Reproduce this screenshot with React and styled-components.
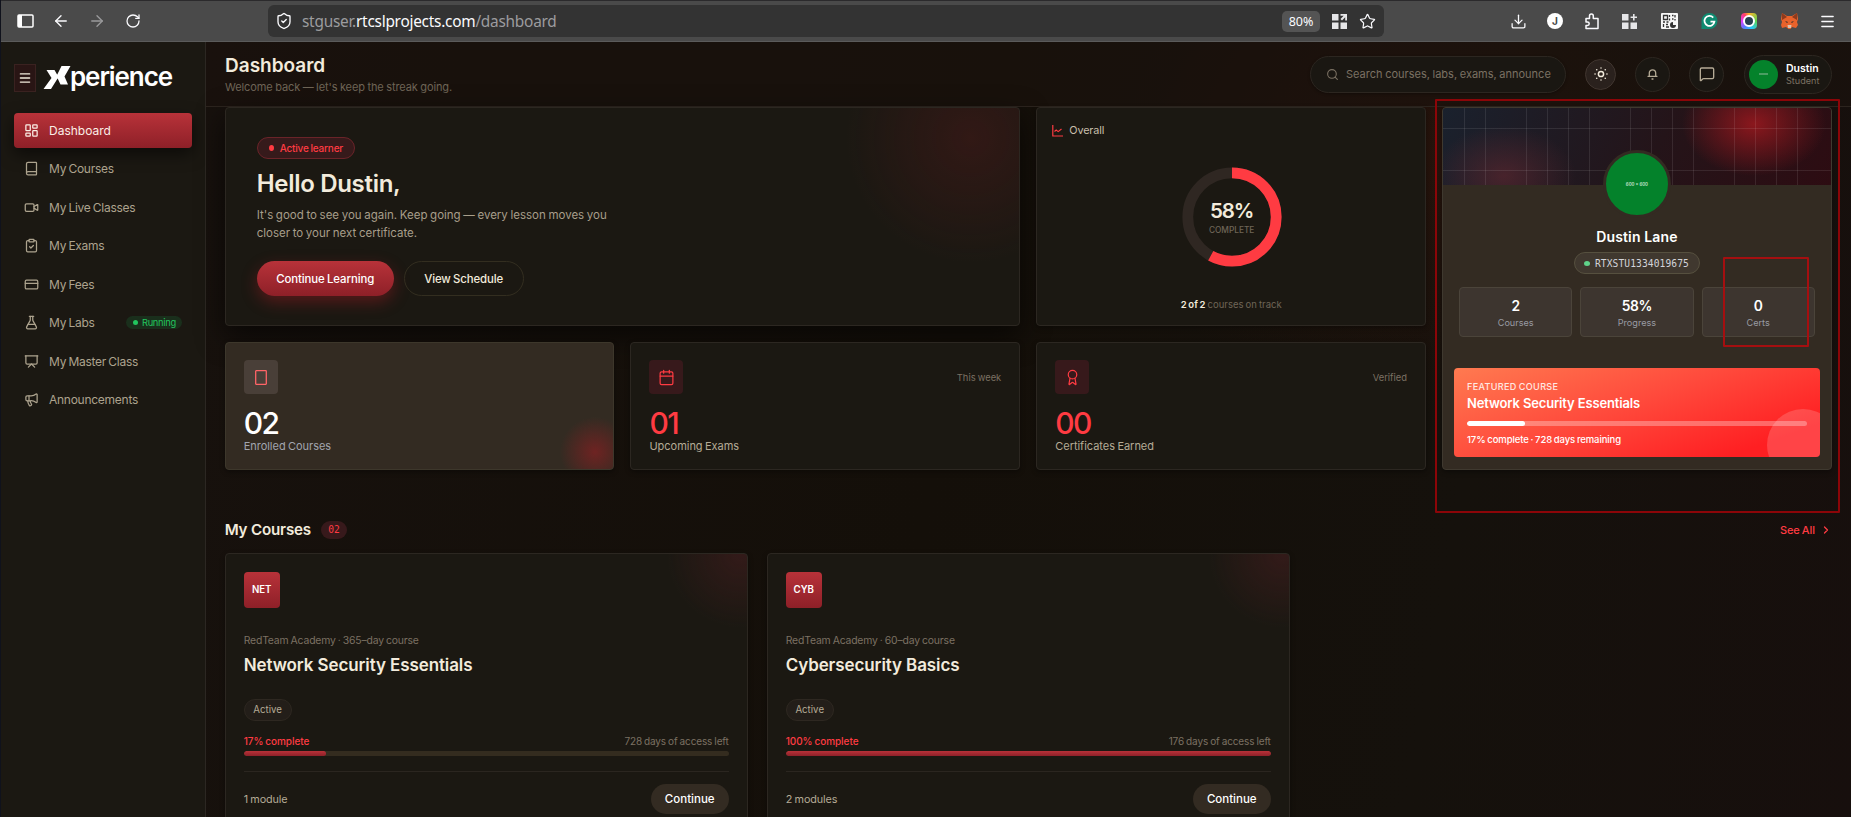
import React from "react";
import styled, { createGlobalStyle, css } from "styled-components";
import {
  ArrowLeft, ArrowRight, RotateCw, ShieldCheck, Star, Download, Menu, Search,
  MessageSquare, LayoutDashboard, Book, Video, ClipboardCheck, CreditCard, FlaskConical,
  Presentation, Megaphone, Calendar, Award, ChevronRight,
} from "lucide-react";

const Global = createGlobalStyle`
  * { box-sizing: border-box; }
  body { margin: 0; background: #140f0a; overflow: hidden; font-family: Inter, "Liberation Sans", sans-serif; }
  button { font: inherit; cursor: pointer; word-spacing: inherit; letter-spacing: inherit; }
`;

const Window = styled.div`
  display: flex; flex-direction: column; position: relative;
  width: 1851px; height: 817px; overflow: hidden;
  border-left: 1px solid #10121c; color: #f2ebdc;
`;

/* Browser bar */
const Chrome = styled.div`
  flex: none; height: 42px; display: flex; align-items: center;
  background: #4a4a4a; border-top: 1px solid #2b2a2c; border-bottom: 1px solid #5b5b5b;
  color: #fbfbfe; padding: 0 6px;
`;
const ChromeNav = styled.div`display: flex; width: 261px;`;
const ChromeButton = styled.span`
  width: ${p => p.$w || 36}px; display: flex; justify-content: center; align-items: center;
  opacity: ${p => (p.$dim ? 0.45 : 1)};
`;
const UrlBar = styled.div`
  width: 1116px; height: 32px; border-radius: 6px; background: #333; display: flex; align-items: center; padding: 0 2px 0 7px;
`;
const Url = styled.span`
  flex: 1; margin: 1px 0 0 9px; font: 15.4px/20px "Noto Sans", "Open Sans", sans-serif; color: #9c9c9f; letter-spacing: -0.25px;
  b { font-weight: 400; color: #fbfbfe; }
`;
const Zoom = styled.span`
  width: 38px; height: 21px; border-radius: 5px; background: #545454; text-align: center;
  font: 12.5px/21px "Noto Sans", sans-serif; margin-right: 6px;
`;
const Extensions = styled.div`display: flex; margin-left: auto;`;

/* Sidebar */
const Body = styled.div`flex: 1; display: flex; min-height: 0;`;
const Sidebar = styled.aside`
  flex: none; width: 205px; background: #1b1812; border-right: 1px solid #2c2722; padding: 22px 13px 0;
`;
const Brand = styled.div`display: flex; align-items: center; height: 28px; margin-bottom: 21px;`;
const Burger = styled.span`
  width: 22px; height: 28px; background: #291514; border: 1px solid #3a2220; display: grid; place-items: center; margin-right: 7px;
`;
const BrandName = styled.span`font: 600 26px/28px Inter, sans-serif; letter-spacing: -1.1px; color: #fff; margin: -2px 0 0 -1px;`;
const NavItem = styled.div`
  display: flex; align-items: center; height: 35px; margin-bottom: 3.45px; padding: 0 10px; border-radius: 4px;
  font-size: 12px; letter-spacing: -0.022em; word-spacing: -0.07em; color: #ada38e;
  ${p => p.$active && css`
    color: #fbeee6; background: linear-gradient(#b83239, #8e2028); box-shadow: 0 6px 16px rgba(0,0,0,.55);
    letter-spacing: 0;
  `}
  svg { margin-right: 10px; flex: none; }
`;
const Running = styled.span`
  margin-left: auto; display: flex; align-items: center; gap: 4px; height: 13px; padding: 0 6px 0 7px; border-radius: 7px;
  background: #1a2f1c; color: #22c55e; font-size: 9.3px;
  &::before { content: ""; width: 5px; height: 5px; border-radius: 50%; background: #22c55e; }
`;

/* Header */
const Main = styled.main`
  flex: 1; display: flex; flex-direction: column; min-width: 0;
  background: radial-gradient(330px 260px at 1229px 110px, rgba(90,25,10,.24), transparent),
    linear-gradient(100deg, #17110d, #140f09 45%, #15110c 75%, #170f0d);
`;
const Header = styled.header`
  flex: none; height: 65px; border-bottom: 1px solid #2c241e; display: flex; align-items: center; padding: 0 19px; background: rgba(27,18,14,.6);
`;
const Headings = styled.div`margin-right: auto;`;
const PageTitle = styled.h1`margin: 1px 0 0; font-size: 19px; line-height: 24px; font-weight: 600;`;
const PageSub = styled.p`margin: 2px 0 0; font-size: 11px; line-height: 15px; letter-spacing: -0.1px; word-spacing: -0.04em; color: #6f6557;`;
const SearchBox = styled.div`
  width: 256px; height: 37px; border-radius: 19px; border: 1px solid #2c2620; background: #1a1712;
  display: flex; align-items: center; padding: 0 13px 0 15px; color: #7b7163; margin-right: 19px; box-shadow: 0 1px 3px #0005;
  span { margin-left: 7px; font-size: 11px; white-space: nowrap; word-spacing: -0.04em; }
  svg { flex: none; }
`;
const RoundButton = styled.span`
  width: ${p => p.$size}px; height: ${p => p.$size}px; border-radius: 50%; display: grid; place-items: center;
  border: 1px solid ${p => (p.$lit ? "#40352f" : "#2c2620")}; background: ${p => (p.$lit ? "#2a211d" : "#1a1712")};
  color: ${p => (p.$lit ? "#f2ebdc" : "#b5ab96")}; margin-right: ${p => p.$gap || 19}px;
`;
const UserPill = styled.div`
  width: 88px; height: 39px; border-radius: 20px; border: 1px solid #2c2620; background: #1a1712;
  display: flex; align-items: center; padding-left: 4px;
`;
const SmallAvatar = styled.span`
  width: 29px; height: 29px; border-radius: 50%; background: #04822b; display: grid; place-items: center; margin-right: 8px;
  &::before { content: ""; width: 9px; height: 1.5px; background: #4a9e63; }
`;
const UserName = styled.div`font-size: 10.5px; line-height: 12px; font-weight: 600; color: #fff;`;
const UserRole = styled.div`font-size: 9.1px; line-height: 11px; color: #7b7163;`;

/* Cards */
const Content = styled.div`padding: 0 19.2px 0 18.7px; word-spacing: -0.6px;`;
const Overview = styled.div`display: grid; grid-template-columns: repeat(4, 1fr); grid-template-rows: 219px 128px; gap: 16px;`;
const Card = styled.section`
  position: relative; overflow: hidden; border: 1px solid #2c2721; border-radius: 4px; background: #1b1812; box-shadow: 0 2px 5px rgba(0,0,0,.35);
`;
const Hero = styled(Card)`
  grid-column: span 2; padding: 29px 31px;
  background: radial-gradient(circle 125px at 745px 30px, rgba(110,25,30,.27), transparent), #1b1812;
  box-shadow: 0 10px 28px rgba(0,0,0,.6);
`;
const LearnerTag = styled.div`
  width: 98px; height: 22px; border-radius: 11px; border: 1px solid #6b2429; background: #361a1b; color: #ff3b42;
  display: flex; align-items: center; padding-left: 11px; font-size: 10px; font-weight: 500; letter-spacing: -0.2px;
  &::before { content: ""; width: 5px; height: 6px; border-radius: 50%; background: #ff3b42; margin-right: 6px; }
`;
const Hello = styled.h2`margin: 9px 0 0; font-size: 24px; line-height: 32px; font-weight: 600; letter-spacing: -0.3px; word-spacing: 0;`;
const HeroText = styled.p`margin: 6px 0 0; font-size: 11.5px; line-height: 18px; color: #a89e8a;`;
const Actions = styled.div`display: flex; gap: 10px; margin-top: 19px;`;
const Action = styled.button`
  height: 35px; width: ${p => (p.$primary ? 137 : 120)}px; border-radius: 18px; padding: 0; font-size: 11.4px; font-weight: 500; letter-spacing: -0.1px;
  color: ${p => (p.$primary ? "#fff" : "#f2ebdc")};
  border: ${p => (p.$primary ? "0" : "1px solid #332e20")};
  background: ${p => (p.$primary ? "linear-gradient(#b83239, #8e2028)" : "transparent")};
  box-shadow: ${p => (p.$primary ? "0 6px 16px rgba(160,28,36,.45)" : "none")};
`;
const Overall = styled(Card)`display: flex; flex-direction: column; align-items: center;`;
const OverallTitle = styled.div`
  align-self: stretch; display: flex; align-items: center; gap: 6px; padding: 14px 0 0 15px; height: 31px; font-size: 10.8px; letter-spacing: -0.01em; color: #c9bfab;
`;
const Ring = styled.div`position: relative; margin: 28px 0 0 1px; width: 100px; height: 100px; svg { display: block; }`;
const RingLabel = styled.div`
  position: absolute; inset: 0; display: flex; flex-direction: column; align-items: center; justify-content: center; padding-top: 1px;
  b { font-size: 20.5px; line-height: 24px; font-weight: 600; letter-spacing: -0.05em; }
  span { font-size: 8.3px; line-height: 14px; font-weight: 500; color: #6f6557; }
`;
const Track = styled.p`margin: 31px 0 0; font-size: 9.5px; line-height: 14px; color: #6f6557; b { color: #f2ebdc; font-weight: 600; }`;

const Stat = styled(Card)`
  padding: 17px 18px;
  ${p => p.$warm && css`
    border-color: #3d372b;
    background: radial-gradient(circle 35px at 369px 109px, rgba(150,30,34,.6), rgba(150,30,34,0)), #332b22;
  `}
`;
const StatTop = styled.div`display: flex; justify-content: space-between; align-items: center; font-size: 9.4px; color: #7b7163;`;
const StatIcon = styled.span`
  width: 34px; height: 34px; border-radius: 4px; display: grid; place-items: center;
  background: ${p => (p.$warm ? "#493f38" : "#37191b")}; color: ${p => (p.$warm ? "#ff6467" : "#ff3b42")};
`;
const StatValue = styled.div`
  margin-top: 12px; font-size: 30px; line-height: 34px; font-weight: 500; letter-spacing: -0.05em; color: ${p => (p.$warm ? "#fff" : "#ff3b42")};
`;
const StatLabel = styled.div`font-size: 11px; line-height: 14px; margin-top: -1px; letter-spacing: -0.03px; color: ${p => (p.$warm ? "#a2a5ae" : "#b5ab96")};`;

/* Profile */
const Profile = styled(Card)`
  grid-column: 4; grid-row: 1 / span 2; background: #332b22; border-color: #3f392f; display: flex; flex-direction: column; align-items: center;
`;
const Banner = styled.div`
  flex: none; align-self: stretch; height: 77px;
  background:
    repeating-linear-gradient(90deg, transparent 0 20px, rgba(255,255,255,.09) 20px 20.8px) 1px 0,
    linear-gradient(transparent 20px, rgba(255,255,255,.09) 20px 21px, transparent 21px 62px, rgba(255,255,255,.09) 62px 63px, transparent 63px),
    radial-gradient(72px 52px at 311px 16px, rgba(150,24,30,.9), transparent),
    radial-gradient(72px 50px at 61px 68px, rgba(100,40,48,.6), transparent),
    linear-gradient(115deg, #1a212d, #241419 55%, #2d0c12);
`;
const Avatar = styled.div`
  position: relative; flex: none; width: 68px; height: 68px; margin-top: -35px; border-radius: 50%; border: 3px solid #332b22; background: #04822b;
  color: #b5dcbf; font-size: 4.3px; font-weight: 700; word-spacing: 0; display: grid; place-items: center;
`;
const ProfileName = styled.h3`margin: 9px 0 0; font-size: 14px; line-height: 20px; font-weight: 600; color: #fff; letter-spacing: .01em; word-spacing: 0;`;
const StudentId = styled.div`
  flex: none; margin-top: 5px; height: 22px; width: 126px; border-radius: 11px; border: 1px solid #56503f; background: #40382f; color: #d3d4da;
  display: flex; align-items: center; padding-left: 9px; font: 9.6px "DejaVu Sans Mono", monospace; letter-spacing: .1px;
  &::before { content: ""; width: 6px; height: 5px; border-radius: 50%; background: #5fd38a; margin-right: 5px; }
`;
const ProfileStats = styled.div`align-self: stretch; display: grid; grid-template-columns: repeat(3, 1fr); gap: 8px; padding: 0 16px; margin-top: 13px;`;
const ProfileStat = styled.div`
  height: 50px; border: 1px solid #4b443a; border-radius: 4px; background: #3d352f; text-align: center; padding-top: 9px;
  b { display: block; font-size: 13.8px; line-height: 18px; font-weight: 600; color: #fff; letter-spacing: -0.03em; }
  span { display: block; font-size: 9.1px; line-height: 15px; color: #999ba3; }
`;
const Featured = styled.div`
  position: relative; overflow: hidden; align-self: stretch; margin: 31px 11px 0; height: 89px; padding: 12px 13px; border-radius: 4px; color: #fff;
  background: linear-gradient(160deg, #ff7a50, #ff4a3c 45%, #ff1f22 85%);
  &::after { content: ""; position: absolute; right: -19px; top: 41px; width: 72px; height: 72px; border-radius: 50%; background: rgba(255,255,255,.17); }
`;
const FeaturedTag = styled.div`font-size: 9.1px; line-height: 14px; letter-spacing: .035em; font-weight: 500; opacity: .85;`;
const FeaturedTitle = styled.div`font-size: 13px; line-height: 18px; font-weight: 600; margin-top: 0; letter-spacing: -0.15px; word-spacing: 0;`;
const Meter = styled.div`
  height: 5px; border-radius: 3px; background: ${p => p.$bg}; margin-top: ${p => p.$top}px; overflow: hidden;
`;
const MeterFill = styled.div`height: 5px; border-radius: 3px; background: ${p => p.$fill};`;
const FeaturedNote = styled.div`font-size: 9.5px; line-height: 14px; margin-top: 7px; font-weight: 500; letter-spacing: -0.11px;`;

/* Courses */
const SectionHead = styled.div`display: flex; align-items: center; margin: 49px 0 12px; height: 22px;`;
const SectionTitle = styled.h2`margin: 0; font-size: 15.2px; line-height: 22px; font-weight: 600; letter-spacing: -0.2px; word-spacing: 0;`;
const Count = styled.span`
  margin-left: 10px; width: 26px; height: 18px; border-radius: 9px; background: #37191b; color: #ff3b42; text-align: center; font: 500 9.6px/17px "DejaVu Sans Mono", monospace;
`;
const SeeAll = styled.span`margin-left: auto; display: flex; align-items: center; gap: 5px; color: #ff3b42; font-size: 11px; font-weight: 500; letter-spacing: -0.12px;`;
const Courses = styled.div`display: grid; grid-template-columns: repeat(3, 1fr); gap: 19px;`;
const Course = styled(Card)`
  height: 290px; padding: 18px; background: radial-gradient(circle 74px at 515px 0, rgba(90,30,36,.38), transparent), #1b1812;
`;
const CourseBadge = styled.div`
  width: 36px; height: 36px; border-radius: 4px; background: linear-gradient(#b83239, #8e2028); color: #fff; text-align: center;
  font-size: 9.7px; line-height: 36px; font-weight: 600;
`;
const CourseMeta = styled.div`margin-top: 26px; font-size: 10.4px; line-height: 14px; letter-spacing: -0.17px; color: #7b7163;`;
const CourseTitle = styled.h3`margin: 6px 0 0; font-size: 17px; line-height: 22px; font-weight: 600; letter-spacing: -0.1px; word-spacing: 0;`;
const Status = styled.span`
  display: block; width: 48px; height: 22px; margin-top: 23px; border-radius: 11px; border: 1px solid #2e2821; background: #231e19; color: #b5ab96;
  text-align: center; font-size: 9.7px; line-height: 20px;
`;
const Progress = styled.div`
  display: flex; justify-content: space-between; margin-top: 13px; font-size: 10px; line-height: 14px; letter-spacing: -0.13px; color: #7b7163;
  b { color: #ff3b42; font-weight: 500; letter-spacing: -0.06px; }
`;
const CourseFoot = styled.div`
  display: flex; justify-content: space-between; align-items: center; margin-top: 15px; padding-top: 12px; border-top: 1px solid #2b2620; font-size: 10.8px; color: #b5ab96;
  span { letter-spacing: -0.1px; }
`;
const Continue = styled.button`width: 78px; height: 30px; padding: 0; border: 0; border-radius: 15px; background: #332b22; color: #fff; font-size: 11.5px; font-weight: 500;`;

/* Mark-up rectangles that lie over the page */
const Marker = styled.div`
  position: absolute; left: ${p => p.$x}px; top: ${p => p.$y}px; width: ${p => p.$w}px; height: ${p => p.$h}px;
  border: 2px solid ${p => p.$c}; border-radius: 1px;
`;

const Logo = () => (
  <svg width="28" height="24" viewBox="0 0 28 24" fill="#fff">
    <path d="M3.500 4h8l4 7-7.500 12H.5l8-11zM18.500 0h9l-6 10.500 3.500 8h-7.500L13.500 10z" />
  </svg>
);
const SidebarIcon = () => (
  <svg width="17" height="14" viewBox="0 0 17 14"><rect x="1" y="1" width="15" height="12" rx="1" fill="none" stroke="#fff" strokeWidth="1.500" /><path d="M1 1h4v12H1z" fill="#fff" /></svg>
);
const Tiles = ({ plus }) => (
  <svg width="15" height="15" viewBox="0 0 15 15" fill="#e6e6e8">
    <path d="M0 0h6.500v6.500H0zM0 8.500h6.500V15H0zM8.500 8.500H15V15H8.500z" />
    {plus ? <path d="M11 0h1.600v2.500H15v1.600h-2.400v2.500H11V4.100H8.600V2.500H11z" /> : <path d="M8.500 0H15v6.500h-1.800V3.200L10 6.500 8.500 5l3.200-3.200H8.500z" />}
  </svg>
);
const Initial = () => (
  <svg width="16" height="16" viewBox="0 0 16 16"><circle cx="8" cy="8" r="8" fill="#fff" /><text x="8" y="11.500" textAnchor="middle" fontSize="10" fontWeight="700" fill="#444" fontFamily="Inter">J</text></svg>
);
const PuzzleIcon = () => (
  <svg width="14" height="17" viewBox="0 0 14 17" fill="none" stroke="currentColor" strokeWidth="1.500" strokeLinejoin="round">
    <path d="M1 7V5.500h3.500V3a1.900 1.900 0 0 1 3.800 0v2.500H13V15.500H1v-3h1.500a1.700 1.700 0 0 0 0-3.400H1z" />
  </svg>
);
const QrCode = () => (
  <svg width="17" height="16" viewBox="0 0 17 16"><rect width="17" height="16" rx="1" fill="#f7f7f7" />
    <path d="M2.500 2.500h4v4h-4zM8.500 2v2M8.500 5.500v2M11 2.500h1.500M14 2v2.500M11 6h1.500M14 6v1.500M2 9h2M5.500 9h2M2.500 11v3M5 11.500h2M5 14h3" fill="none" stroke="#333" strokeWidth="1.300" />
    <path d="M12 9v3h3a3 3 0 1 1-3-3z" fill="#333" /></svg>
);
const Grammar = () => (
  <svg width="17" height="16" viewBox="0 0 17 16"><path d="M8.500 0a8 8 0 1 1 0 16h-8V8a8 8 0 0 1 8-8z" fill="#0f8a70" /><path d="M12.200 4.600A5 5 0 1 0 13.400 8.600H9.500" fill="none" stroke="#fff" strokeWidth="1.800" /></svg>
);
const Lens = styled.span`
  width: 16px; height: 16px; border-radius: 4px; display: grid; place-items: center;
  background: conic-gradient(#ffb52b, #5bd14f 25%, #25c7ff 45%, #5c7bff 60%, #e43bff 75%, #ff3b6b 90%, #ffb52b);
  &::before { content: ""; width: 8px; height: 8px; border-radius: 50%; border: 2px solid #fff; background: #263e4e; }
`;
const Fox = () => (
  <svg width="17" height="16" viewBox="0 0 17 16"><path d="M1 0l5 3h5l5-3 1 6-1 3 1 3-2 3-4-1-1.500 2h-2L5 14l-4 1-1-3 1-3-1-3z" fill="#e8622b" /><path d="M1 0l5 4-5 3zM16 0l-5 4 5 3z" fill="#8f3a1c" /><path d="M4 8l3 1-1 1zM13 8l-3 1 1 1z" fill="#2b2b2b" /><path d="M6.500 12h4l-.5 3h-3z" fill="#d8c3b0" /></svg>
);
const SunIcon = () => (
  <svg width="14" height="14" viewBox="0 0 14 14" fill="none" stroke="currentColor" strokeWidth="1.500" strokeLinecap="round">
    <circle cx="7" cy="7" r="2.600" />
    <path d="M7 1v.1M7 12.900v.1M1 7h.1M12.900 7h.1M2.700 2.700l.1.1M11.200 11.200l.1.1M2.700 11.300l.1-.1M11.200 2.800l.1-.1" />
  </svg>
);
const BellIcon = () => (
  <svg width="11" height="12" viewBox="0 0 11 12" fill="none" stroke="currentColor" strokeWidth="1.300" strokeLinecap="round" strokeLinejoin="round">
    <path d="M1 8.300h9M2.300 8V5a3.200 3.200 0 0 1 6.400 0v3M5 11h1" />
  </svg>
);
const ChartIcon = () => (
  <svg width="11" height="12" viewBox="0 0 11 12" fill="none" stroke="#ff3b42" strokeWidth="1.200"><path d="M.8 0v11H11M2.500 6.500l1.700-1.500 2 1.600L9.500 4" /></svg>
);
const TabletIcon = () => <svg width="12" height="15" viewBox="0 0 12 15" fill="none" stroke="currentColor" strokeWidth="1.300"><rect x=".7" y=".7" width="10.600" height="13.600" rx=".5" /></svg>;

const NAV = [
  [LayoutDashboard, "Dashboard"], [Book, "My Courses"], [Video, "My Live Classes"], [ClipboardCheck, "My Exams"],
  [CreditCard, "My Fees"], [FlaskConical, "My Labs"], [Presentation, "My Master Class"], [Megaphone, "Announcements"],
];
const COURSES = [
  { code: "NET", meta: "RedTeam Academy · 365–day course", title: "Network Security Essentials", done: 17, days: "728 days of access left", modules: "1 module" },
  { code: "CYB", meta: "RedTeam Academy · 60–day course", title: "Cybersecurity Basics", done: 100, days: "176 days of access left", modules: "2 modules" },
];

export default function App() {
  return (
    <Window>
      <Global />
      <Chrome>
        <ChromeNav>
          <ChromeButton><SidebarIcon /></ChromeButton>
          <ChromeButton><ArrowLeft size={18} strokeWidth={1.8} /></ChromeButton>
          <ChromeButton $dim><ArrowRight size={18} strokeWidth={1.8} /></ChromeButton>
          <ChromeButton><RotateCw size={16} strokeWidth={1.9} /></ChromeButton>
        </ChromeNav>
        <UrlBar>
          <ShieldCheck size={18} strokeWidth={1.8} />
          <Url>stguser.<b>rtcslprojects.com</b>/dashboard</Url>
          <Zoom>80%</Zoom>
          <ChromeButton $w={27}><Tiles /></ChromeButton>
          <ChromeButton $w={29}><Star size={17} strokeWidth={1.7} /></ChromeButton>
        </UrlBar>
        <Extensions>
          <ChromeButton $w={37}><Download size={17} strokeWidth={1.8} /></ChromeButton>
          <ChromeButton><Initial /></ChromeButton>
          <ChromeButton $w={37}><PuzzleIcon /></ChromeButton>
          <ChromeButton $w={39}><Tiles plus /></ChromeButton>
          <ChromeButton $w={40}><QrCode /></ChromeButton>
          <ChromeButton $w={40}><Grammar /></ChromeButton>
          <ChromeButton $w={40}><Lens /></ChromeButton>
          <ChromeButton $w={40}><Fox /></ChromeButton>
          <ChromeButton $w={36}><Menu size={17} strokeWidth={1.9} /></ChromeButton>
        </Extensions>
      </Chrome>
      <Body>
        <Sidebar>
          <Brand>
            <Burger><Menu size={14} strokeWidth={2.2} /></Burger>
            <Logo /><BrandName>perience</BrandName>
          </Brand>
          {NAV.map(([Icon, label], i) => (
            <NavItem key={label} $active={i === 0}>
              <Icon size={15} strokeWidth={2} />{label}
              {label === "My Labs" && <Running>Running</Running>}
            </NavItem>
          ))}
        </Sidebar>
        <Main>
          <Header>
            <Headings>
              <PageTitle>Dashboard</PageTitle>
              <PageSub>Welcome back — let's keep the streak going.</PageSub>
            </Headings>
            <SearchBox><Search size={13} /><span>Search courses, labs, exams, announce</span></SearchBox>
            <RoundButton $size={31} $lit><SunIcon /></RoundButton>
            <RoundButton $size={35}><BellIcon /></RoundButton>
            <RoundButton $size={35} $gap={20}><MessageSquare size={16} /></RoundButton>
            <UserPill>
              <SmallAvatar />
              <div><UserName>Dustin</UserName><UserRole>Student</UserRole></div>
            </UserPill>
          </Header>
          <Content>
            <Overview>
              <Hero>
                <LearnerTag>Active learner</LearnerTag>
                <Hello>Hello Dustin,</Hello>
                <HeroText>It's good to see you again. Keep going — every lesson moves you<br />closer to your next certificate.</HeroText>
                <Actions>
                  <Action $primary>Continue Learning</Action>
                  <Action>View Schedule</Action>
                </Actions>
              </Hero>
              <Overall>
                <OverallTitle><ChartIcon />Overall</OverallTitle>
                <Ring>
                  <svg width="100" height="100" viewBox="0 0 100 100" fill="none" strokeWidth="10.800">
                    <circle cx="50" cy="50" r="44.200" stroke="#2f2722" />
                    <circle cx="50" cy="50" r="44.200" stroke="#ff3b42" pathLength="100" strokeDasharray="58 42" transform="rotate(-90 50 50)" />
                  </svg>
                  <RingLabel><b>58%</b><span>COMPLETE</span></RingLabel>
                </Ring>
                <Track><b>2 of 2</b> courses on track</Track>
              </Overall>
              <Profile>
                <Banner />
                <Avatar>600 x 600</Avatar>
                <ProfileName>Dustin Lane</ProfileName>
                <StudentId>RTXSTU1334019675</StudentId>
                <ProfileStats>
                  <ProfileStat><b>2</b><span>Courses</span></ProfileStat>
                  <ProfileStat><b>58%</b><span>Progress</span></ProfileStat>
                  <ProfileStat><b>0</b><span>Certs</span></ProfileStat>
                </ProfileStats>
                <Featured>
                  <FeaturedTag>FEATURED COURSE</FeaturedTag>
                  <FeaturedTitle>Network Security Essentials</FeaturedTitle>
                  <Meter $bg="rgba(255,255,255,.3)" $top={9}><MeterFill $fill="#fff" style={{ width: "17%" }} /></Meter>
                  <FeaturedNote>17% complete · 728 days remaining</FeaturedNote>
                </Featured>
              </Profile>
              <Stat $warm>
                <StatTop><StatIcon $warm><TabletIcon /></StatIcon></StatTop>
                <StatValue $warm>02</StatValue>
                <StatLabel $warm>Enrolled Courses</StatLabel>
              </Stat>
              <Stat>
                <StatTop><StatIcon><Calendar size={17} strokeWidth={1.7} /></StatIcon>This week</StatTop>
                <StatValue>01</StatValue>
                <StatLabel>Upcoming Exams</StatLabel>
              </Stat>
              <Stat>
                <StatTop><StatIcon><Award size={17} strokeWidth={1.7} /></StatIcon>Verified</StatTop>
                <StatValue>00</StatValue>
                <StatLabel>Certificates Earned</StatLabel>
              </Stat>
            </Overview>
            <SectionHead>
              <SectionTitle>My Courses</SectionTitle><Count>02</Count>
              <SeeAll>See All<ChevronRight size={12} strokeWidth={2.5} /></SeeAll>
            </SectionHead>
            <Courses>
              {COURSES.map(c => (
                <Course key={c.code}>
                  <CourseBadge>{c.code}</CourseBadge>
                  <CourseMeta>{c.meta}</CourseMeta>
                  <CourseTitle>{c.title}</CourseTitle>
                  <Status>Active</Status>
                  <Progress><b>{c.done}% complete</b><span>{c.days}</span></Progress>
                  <Meter $bg="#342c1f" $top={3}><MeterFill $fill="linear-gradient(#b83239, #8e2028)" style={{ width: c.done + "%" }} /></Meter>
                  <CourseFoot><span>{c.modules}</span><Continue>Continue</Continue></CourseFoot>
                </Course>
              ))}
            </Courses>
          </Content>
        </Main>
      </Body>
      <Marker $x={1434} $y={99} $w={405} $h={414} $c="#8c0508" />
      <Marker $x={1722} $y={257} $w={86} $h={90} $c="#a50f10" />
    </Window>
  );
}
